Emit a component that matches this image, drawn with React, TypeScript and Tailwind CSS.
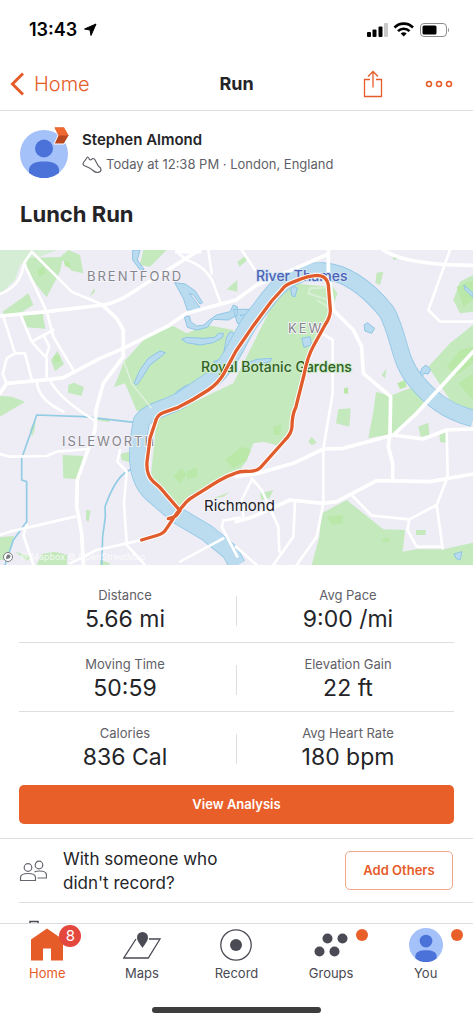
import type { ReactNode } from 'react'

const stats = [
  [
    { label: 'Distance', value: '5.66 mi' },
    { label: 'Avg Pace', value: '9:00 /mi' },
  ],
  [
    { label: 'Moving Time', value: '50:59' },
    { label: 'Elevation Gain', value: '22 ft' },
  ],
  [
    { label: 'Calories', value: '836 Cal' },
    { label: 'Avg Heart Rate', value: '180 bpm' },
  ],
]

const parks = [
  'M520 228 560 250 620 225 700 240 700 340 560 450 470 480 410 482 375 400 342 412 372 335 440 260Z',
  'M470 510 700 400 820 160 880 100 1000 112 1012 130 992 190 940 290 888 490 870 552 848 590 790 575 760 580 740 632 715 665 640 700 545 775 450 700Z',
  'M80 25 190 20 180 65 140 142 112 108 80 60Z',
  'M180 22 205 0 240 15 250 70 215 62Z',
  'M8 185 50 155 85 130 100 165 60 190 12 195Z',
  'M68 195 128 192 136 236 78 232Z',
  'M153 330 172 302 192 342 165 364Z',
  'M205 405 222 398 252 412 244 438 204 428Z',
  'M0 438 35 440 75 455 0 500Z',
  'M268 140 282 115 285 125Z',
  'M188 615 250 618 240 688 190 685Z',
  'M430 0 500 0 450 50 420 45Z',
  'M415 468 438 465 440 490 420 488Z',
  'M680 118 712 90 712 125Z',
  'M362 612 388 605 392 638 365 630Z',
  'M90 540 108 500 104 540 96 560Z',
  'M280 502 335 508 325 516 285 510Z',
  'M0 862 42 858 20 930 0 930Z',
  'M45 905 95 920 80 932Z',
  'M125 912 165 905 202 915 200 945 110 945Z',
  'M300 930 330 940 328 945 300 945Z',
  'M258 780 272 782 266 815 258 810Z',
  'M713 35 735 18 740 32 718 50Z',
  'M1178 20 1210 22 1180 30Z',
  'M1130 68 1150 65 1140 105 1126 98Z',
  'M1360 150 1380 95 1419 75 1419 185 1380 190Z',
  'M1285 350 1350 280 1419 225 1419 500 1350 450Z',
  'M1120 485 1128 425 1170 438 1240 410 1275 462 1188 550 1105 565Z',
  'M1145 375 1160 355 1155 385Z',
  'M1008 520 1015 478 1052 475 1048 530Z',
  'M925 575 935 560 950 578 935 585Z',
  'M1255 530 1285 518 1288 555 1262 560Z',
  'M1318 550 1342 545 1342 580 1320 575Z',
  'M780 730 820 720 808 745 785 750Z',
  'M640 745 690 725 670 740Z',
  'M965 790 1040 750 1150 838 1215 840 1208 905 1250 898 1330 898 1419 878 1419 945 935 945 958 860Z',
  'M1248 840 1278 840 1276 855 1248 855Z',
]

const meadows = [
  'M110 60 130 50 138 70 118 80Z',
  'M192 32 208 35 212 55 195 48Z',
  'M160 320 178 315 180 335 164 338Z',
  'M520 680 545 655 560 672 540 700Z',
  'M560 665 590 652 592 680 562 688Z',
  'M675 630 725 590 752 600 740 630 700 655Z',
  'M820 530 845 525 840 555 822 555Z',
  'M980 800 1030 795 1028 820 995 825Z',
  'M1370 110 1419 90 1419 150 1390 170Z',
  'M1340 350 1380 300 1419 290 1419 340 1370 375Z',
  'M1375 400 1419 370 1419 450Z',
  'M1192 400 1215 390 1220 410 1200 418Z',
  'M1032 415 1044 412 1044 432 1032 430Z',
  'M1145 870 1168 862 1168 875 1148 878Z',
]

const water = [
  'M398 0 420 0 412 30 432 58 422 62 398 30Z',
  'M524 98 555 102 585 122 608 158 600 162 580 135 568 130 600 172 590 182 562 180 550 145Z',
  'M553 200 568 198 572 215 590 228 612 225 628 210 650 195 690 185 700 165 712 170 712 195 685 210 640 208 622 232 590 240 562 232Z',
  'M545 268 560 262 610 265 645 262 655 250 670 250 668 262 640 278 600 285 560 278Z',
  'M402 400 420 360 445 325 480 303 496 308 480 322 450 345 425 385 410 405Z',
  'M680 262 690 245 715 255 725 300 640 398 580 440 510 478 462 482 512 450 530 425 560 405 585 408 620 370 655 345 640 335 668 325Z',
  'M700 178 770 178 765 190 720 196 760 205 740 225 712 220Z',
  'M872 120 880 108 892 115 885 140 876 138Z',
  'M905 265 930 260 935 285 912 292Z',
  'M728 345 770 328 815 325 810 335 770 345 735 358Z',
  'M1092 225 1102 218 1115 228 1124 235 1115 250 1095 243Z',
  'M1265 355 1278 345 1292 358 1285 372 1272 370 1266 380 1260 375Z',
  'M1392 105 1419 130 1419 142 1394 118Z',
  'M1362 912 1375 908 1386 905 1380 930 1368 925Z',
]

const mainRoads =
  'M0 198 140 185 310 165C370 155 400 120 480 75L590 5M530 5H600M0 430 20 400 150 388 190 383 300 325 370 295 500 230 560 190 708 150 770 105 985 12M708 680 775 670 880 640 970 597 1030 595 1180 555 1270 567 1340 540 1419 537M1180 555 1250 490 1419 305M708 815 760 800 870 750 970 760 1010 755 1130 692 1290 695 1419 672M1150 0Q1220 46 1419 46M985 0V60L1000 180 1060 240 1085 290 1090 370 1172 440 1170 550 1165 590 1178 640V690M310 168 350 205 370 240V320L310 400 288 480 285 540 265 597 232 690 230 770 245 850 250 940'

const minorRoads =
  'M95 5 215 125 310 165M0 132Q62 110 72 40L95 5M72 40 140 185 160 260 220 360M530 5 560 30Q620 50 640 100L660 155M625 0 635 70M10 200 45 310H75L95 388M20 400 8 372 20 325 45 310M62 195 95 275 140 325V388M95 275 160 240M130 255 148 290 138 320M110 395Q115 450 190 485M150 390Q175 445 285 512M0 612 30 620 140 618 170 605 265 597M0 855 30 845 225 800M80 825 70 855 100 945M360 600 352 635 380 665 372 760 380 880M210 940 290 900 380 880 425 870M380 885 435 945M540 935 670 865M720 803 670 812 665 830 712 920M958 245 998 270V430L970 597V760L950 860 890 945M1340 540 1343 680 1310 765 1328 895M1055 735 1115 797 1228 808 1310 765M1228 808 1222 840 1250 890H1328M755 685 785 720 835 830 838 905M885 755 880 860 820 945M755 690 725 750 730 800M708 890 770 945M1350 0 1285 180 1320 215H1419M725 0 765 60'

const river =
  'M712 945 690 905 620 848 530 795 455 730C400 680 410 590 424 515 440 485 490 478 540 452L640 385C700 330 715 265 755 210L805 145C850 85 905 60 970 63 1050 68 1115 130 1160 185 1200 260 1195 330 1245 390 1290 445 1340 485 1419 505'

const route =
  'M425 870 475 855Q492 850 500 835L530 790 560 755Q566 747 580 740L655 693Q680 678 705 670 720 663 745 664 770 665 782 652L855 570Q875 550 876 530 876 495 888 470L912 375Q922 320 942 285L975 225Q992 200 991 180L985 105Q980 76 950 76 925 77 900 88L875 98Q855 105 845 120L815 153 760 227 708 303 672 370Q655 400 625 420 580 450 535 472L490 488Q470 495 465 520L450 565Q446 600 441 635 438 675 460 695 480 710 495 730L540 782 530 795Q522 803 505 806'

function RouteMap() {
  return (
    <svg viewBox="0 0 473 315" className="block h-auto w-full font-['Inter',sans-serif]" role="img" aria-label="Route map">
      <rect width="473" height="315" fill="#eeecf4" />
      <g transform="scale(0.33333)">
        <path d="M0 0H170L60 45 45 90 0 132Z" fill="#d5edd4" />
        <path d={parks.join('')} fill="#c3e9bd" />
        <path d={meadows.join('')} fill="#b9e8a9" />
        <path d={water.join('')} fill="#b8dbef" stroke="#8fc5e6" strokeWidth="3" />
        <g fill="none" strokeLinejoin="round">
          <path
            d="M410 518 250 500 110 495 95 540 65 625V690L80 695V815L40 870 15 945M395 658Q350 670 315 770L316 800 308 860 305 945"
            stroke="#91cce4"
            strokeWidth="5"
          />
          <path d={river} stroke="#93c8e7" strokeWidth="52" />
          <path d={river} stroke="#badcee" strokeWidth="47" />
          <path d="M370 330 395 400 455 475" stroke="#e2f2df" strokeWidth="4" />
          <path d="M1000 112 930 115 925 130 985 150M1000 180 950 150" stroke="#d9efd5" strokeWidth="6" />
          <g stroke="#fff" strokeLinecap="round">
            <path d={minorRoads} strokeWidth="8" />
            <path d={mainRoads} strokeWidth="11" />
          </g>
        </g>
      </g>
      <g stroke="#f4f3f8" strokeWidth="2" paintOrder="stroke" strokeLinejoin="round">
        <g fill="#85858c" fontSize="13" letterSpacing="2">
          <text x="87" y="31">BRENTFORD</text>
          <text x="62" y="196">ISLEWORTH</text>
          <text x="288" y="83">KEW</text>
        </g>
        <text x="256" y="31" fill="#4c62b8" stroke="#cfe3f1" fontSize="14" fontWeight="500">River Thames</text>
        <text x="201" y="122" fill="#316124" stroke="#cdebc8" fontSize="14" fontWeight="500">Royal Botanic Gardens</text>
        <text x="204" y="261" fill="#202024" fontSize="15">Richmond</text>
      </g>
      <text x="20" y="310" fill="#fff" fillOpacity="0.8" fontSize="9">© Mapbox © OpenStreetMap</text>
      <circle cx="8" cy="307" r="4.5" fill="#fff" stroke="#777b80" />
      <path d="M6 309c0-3 1-5 3-4.500s2 3 0 4z" fill="#777b80" />
      <g fill="none" strokeLinejoin="round" strokeLinecap="round" transform="scale(0.33333)">
        <path d={route} stroke="#fff" strokeWidth="16" />
        <path d={route} stroke="#e15c2d" strokeWidth="10" />
      </g>
    </svg>
  )
}

function Avatar({ className }: { className: string }) {
  return (
    <svg viewBox="0 0 48 48" className={className} aria-hidden="true">
      <circle cx="24" cy="24" r="24" fill="#a5c1f9" />
      <circle cx="24" cy="18.500" r="9" fill="#4b72d9" />
      <path d="M9 43v-3c0-6 6-8.500 15-8.500s15 2.500 15 8.500v3a24 24 0 0 1-30 0z" fill="#4b72d9" />
    </svg>
  )
}

function StatusBar() {
  return (
    <div className="flex h-15 items-center justify-between pr-6 pl-[29px] text-black">
      <div className="flex items-center gap-1.5">
        <span className="text-lg leading-6 font-semibold">13:43</span>
        <svg viewBox="0 0 14 14" className="size-3.5" aria-hidden="true">
          <path d="M13 1 8 12.500 7 7 1.500 6z" fill="currentColor" stroke="currentColor" strokeLinejoin="round" />
        </svg>
      </div>
      <svg viewBox="0 0 86 16" className="h-4 w-[86px]" aria-hidden="true">
        <rect x="4" y="10" width="4" height="5" rx="1" />
        <rect x="9.500" y="7.500" width="4" height="7.500" rx="1" />
        <rect x="15.500" y="4.500" width="4" height="10.500" rx="1" />
        <rect x="21" y="1" width="4" height="14" rx="1" fill="#c9c9c9" />
        <g fill="none" stroke="#000" strokeWidth="2.600">
          <path d="M31.500 5.500a13 13 0 0 1 18.500 0" />
          <path d="M35 9.200a8 8 0 0 1 11.500 0" />
        </g>
        <path d="m40.700 14.500-3-3a4.500 4.500 0 0 1 6 0z" />
        <rect x="57.500" y="1.500" width="26" height="13" rx="3.500" fill="none" stroke="#8d8d8d" />
        <rect x="59.500" y="3.500" width="14" height="9" rx="1.500" />
        <path d="M85 5.500q2 2.500 0 5z" fill="#8d8d8d" />
      </svg>
    </div>
  )
}

function TabItem({ label, active, children }: { label: string; active?: boolean; children: ReactNode }) {
  return (
    <a
      href="#"
      aria-current={active ? 'page' : undefined}
      className={`flex flex-col items-center pt-[3px] ${active ? 'text-[#e65c29]' : 'text-[#4a4a54]'}`}
    >
      <span className="relative flex h-9 items-center justify-center">{children}</span>
      <span className="text-[13px] leading-5">{label}</span>
    </a>
  )
}

export default function App() {
  return (
    <div className="flex h-screen flex-col bg-white font-['Inter',sans-serif] text-[#242428]">
      <StatusBar />
      <header className="grid h-[51px] shrink-0 grid-cols-[1fr_auto_1fr] items-center border-b border-[#dddddf] px-2.5 pb-0.5">
        <a href="#" className="flex items-center gap-2.5 text-xl leading-6 font-light text-[#e65c29]">
          <svg viewBox="0 0 14 24" className="h-6 w-3.5" fill="none" stroke="currentColor" strokeWidth="3" aria-hidden="true">
            <path d="M13 1.500 2.500 12 13 22.500" />
          </svg>
          Home
        </a>
        <h1 className="text-center text-lg leading-6 font-bold">Run</h1>
        <div className="flex items-center justify-end gap-[42px] pr-2.5 text-[#e65c29]">
          <button type="button" aria-label="Share">
            <svg viewBox="0 0 20 28" className="h-7 w-5" fill="none" stroke="currentColor" strokeWidth="1.300" aria-hidden="true">
              <path d="M7 9.500H1.500v17h17v-17H13M10 17.500V1.500M5 6.500l5-5 5 5" />
            </svg>
          </button>
          <button type="button" aria-label="More options">
            <svg viewBox="0 0 28 8" className="h-2 w-7" fill="none" stroke="currentColor" strokeWidth="1.500" aria-hidden="true">
              <circle cx="4" cy="4" r="2.500" />
              <circle cx="14" cy="4" r="2.500" />
              <circle cx="24" cy="4" r="2.500" />
            </svg>
          </button>
        </div>
      </header>

      <main className="min-h-0 flex-1 overflow-y-auto [scrollbar-width:none]">
        <section className="px-5 pt-[17px]">
          <div className="flex items-start gap-[14px]">
            <div className="relative mt-0.5 shrink-0">
              <Avatar className="size-12" />
              <svg viewBox="0 0 17 19" className="absolute -top-1 -right-0.5 h-[19px] w-[17px]" aria-hidden="true">
                <path d="M1 1h10l5 8.500-5 8.500H1l4-8.500z" fill="#b94720" stroke="#fff" />
                <path d="M1.500 1.500h9.500l4.500 8H5.500z" fill="#ee6830" />
              </svg>
            </div>
            <div>
              <p className="text-[15px] leading-6 font-semibold">Stephen Almond</p>
              <p className="flex items-center gap-1 text-[13px] leading-6 text-[#5f5f67]">
                <svg viewBox="0 0 20 17" className="h-[17px] w-5" fill="none" stroke="currentColor" strokeWidth="1.200" strokeLinejoin="round" aria-hidden="true">
                  <path d="M5.500 1 1.500 6.500Q.5 8.500 2 9.500L7.500 12q2 1 3.500 2.500 2 2 5 2 3-.5 3-3 0-1.500-1.500-2.500-1.500-1-2-2.500L12.500 3 10.500 2.500Q9 4.500 7.500 3.500 6.500 1 5.500 1z" />
                </svg>
                Today at 12:38 PM · London, England
              </p>
            </div>
          </div>
          <h2 className="pt-5 pb-5 text-[22px] leading-8 font-bold">Lunch Run</h2>
        </section>

        <RouteMap />

        <section className="px-[19px] pt-[9px]">
          {stats.map((row) => (
            <dl
              key={row[0].label}
              className="grid h-[69px] grid-cols-[1fr_auto_1fr] items-center gap-x-[5px] border-b border-[#dddde2] text-center last-of-type:border-transparent"
            >
              <div className="pt-0.5">
                <dt className="text-[13px] leading-5 text-[#5f5f67]">{row[0].label}</dt>
                <dd className="text-[23px] leading-7">{row[0].value}</dd>
              </div>
              <div className="mt-1.5 h-[30px] w-px bg-[#dddde2]" />
              <div className="pt-0.5">
                <dt className="text-[13px] leading-5 text-[#5f5f67]">{row[1].label}</dt>
                <dd className="text-[23px] leading-7">{row[1].value}</dd>
              </div>
            </dl>
          ))}
          <button type="button" className="mt-1 h-[39px] w-full rounded-[5px] bg-[#e95f2a] text-[13px] font-semibold text-white">
            View Analysis
          </button>
        </section>

        <section className="mt-3.5 border-t border-[#dddddf] pl-[19px]">
          <div className="flex h-16 items-center border-b border-[#dddddf] pr-5">
            <svg viewBox="0 0 28 22" className="mr-4 h-[22px] w-7 shrink-0" fill="none" stroke="#666670" strokeWidth="1.200" aria-hidden="true">
              <circle cx="9" cy="7.500" r="3.800" />
              <circle cx="20" cy="5" r="3.800" />
              <path d="M1.500 20.500v-3q0-4 7.500-4t7.500 4v3zM15.500 12q1.500-1 5-1 7 0 7 4V18H18.500" />
            </svg>
            <p className="flex-1 text-[17px] leading-6">
              With someone who
              <br />
              didn't record?
            </p>
            <button type="button" className="h-[39px] w-[108px] rounded-[5px] border border-[#f0a68b] text-[13px] font-semibold text-[#e65c29]">
              Add Others
            </button>
          </div>
          <div className="flex h-16 items-start pt-[17px] pl-2.5">
            <svg viewBox="0 0 10 24" className="h-6 w-2.5" fill="none" stroke="#4a4a54" strokeWidth="1.500" aria-hidden="true">
              <path d="M1 4V1.500h8V4M1 4v18h8V4" />
            </svg>
          </div>
        </section>
      </main>

      <footer className="h-[101px] shrink-0 border-t border-[#dddddf] bg-white">
        <nav className="grid grid-cols-5" aria-label="Main">
          <TabItem label="Home" active>
            <svg viewBox="0 0 32 34" className="h-[34px] w-8" aria-hidden="true">
              <path d="M16 .5 32 11.500v21H20v-12h-8v12H0v-21z" fill="currentColor" />
            </svg>
            <span className="absolute -top-0.5 -right-[18px] flex size-[22px] items-center justify-center rounded-full bg-[#e4473d] text-[15px] leading-5 text-white">
              8
            </span>
          </TabItem>
          <TabItem label="Maps">
            <svg viewBox="0 0 38 28" className="h-7 w-[38px]" aria-hidden="true">
              <path d="M13 8 .8 27h24.500L37 8H26" fill="none" stroke="currentColor" strokeWidth="1.300" />
              <path d="M19.500 17C17 13 14 10 14 6.500a5.500 5.500 0 0 1 11 0C25 10 22 13 19.500 17z" fill="currentColor" />
            </svg>
          </TabItem>
          <TabItem label="Record">
            <svg viewBox="0 0 32 32" className="size-8" aria-hidden="true">
              <circle cx="16" cy="16" r="15.200" fill="none" stroke="currentColor" strokeWidth="1.300" />
              <circle cx="16" cy="16" r="6" fill="currentColor" />
            </svg>
          </TabItem>
          <TabItem label="Groups">
            <svg viewBox="0 0 34 24" className="h-6 w-[34px]" fill="currentColor" aria-hidden="true">
              <circle cx="13.500" cy="5.500" r="5" />
              <circle cx="28.500" cy="5.500" r="5" />
              <circle cx="5.500" cy="18.500" r="5" />
              <circle cx="20.500" cy="18.500" r="5" />
            </svg>
            <span className="absolute top-0.5 -right-5 size-3 rounded-full bg-[#e95f2a]" />
          </TabItem>
          <TabItem label="You">
            <Avatar className="size-[34px]" />
            <span className="absolute top-0.5 -right-5 size-3 rounded-full bg-[#e95f2a]" />
          </TabItem>
        </nav>
        <div className="mx-auto mt-6 h-1.5 w-[169px] rounded-full bg-[#3d3d3d]" />
      </footer>
    </div>
  )
}
